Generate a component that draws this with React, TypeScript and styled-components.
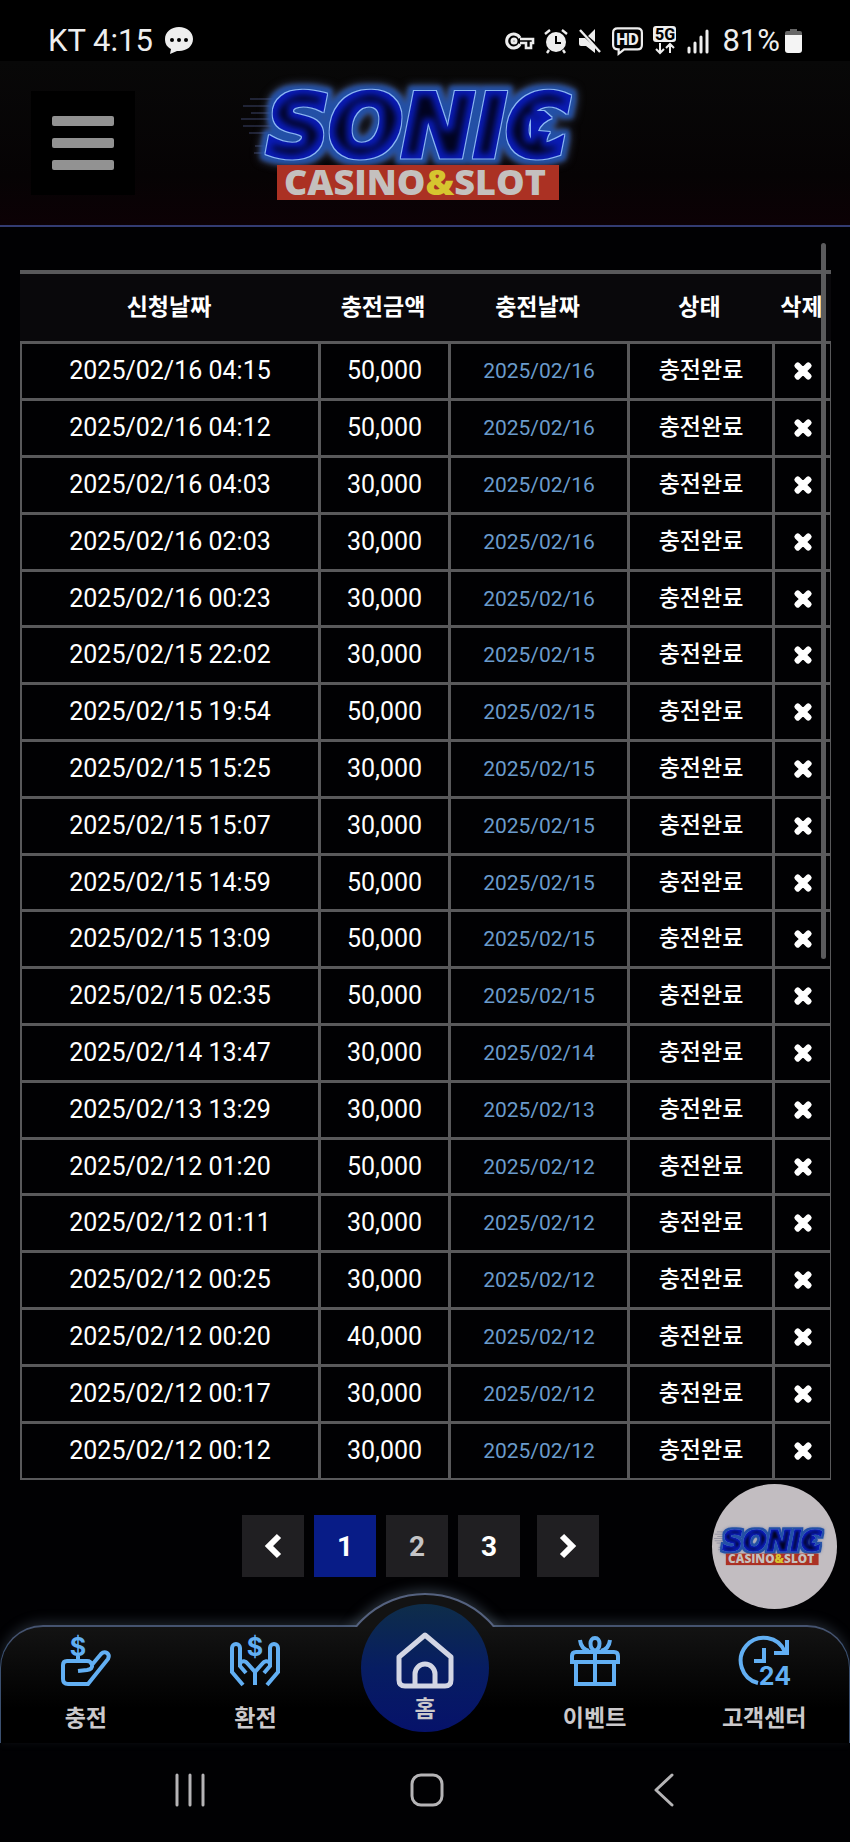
import React, { useState } from 'react';
import styled, { createGlobalStyle } from 'styled-components';
import { FaTimes } from 'react-icons/fa';

/**
 * 충전 신청 내역 타입 정의
 */
interface ChargeItem {
  requestedAt: string;
  amount: string;
}

// 충전 신청 내역 목록
const CHARGE_LIST: ChargeItem[] = [
  { requestedAt: '2025/02/16 04:15', amount: '50,000' },
  { requestedAt: '2025/02/16 04:12', amount: '50,000' },
  { requestedAt: '2025/02/16 04:03', amount: '30,000' },
  { requestedAt: '2025/02/16 02:03', amount: '30,000' },
  { requestedAt: '2025/02/16 00:23', amount: '30,000' },
  { requestedAt: '2025/02/15 22:02', amount: '30,000' },
  { requestedAt: '2025/02/15 19:54', amount: '50,000' },
  { requestedAt: '2025/02/15 15:25', amount: '30,000' },
  { requestedAt: '2025/02/15 15:07', amount: '30,000' },
  { requestedAt: '2025/02/15 14:59', amount: '50,000' },
  { requestedAt: '2025/02/15 13:09', amount: '50,000' },
  { requestedAt: '2025/02/15 02:35', amount: '50,000' },
  { requestedAt: '2025/02/14 13:47', amount: '30,000' },
  { requestedAt: '2025/02/13 13:29', amount: '30,000' },
  { requestedAt: '2025/02/12 01:20', amount: '50,000' },
  { requestedAt: '2025/02/12 01:11', amount: '30,000' },
  { requestedAt: '2025/02/12 00:25', amount: '30,000' },
  { requestedAt: '2025/02/12 00:20', amount: '40,000' },
  { requestedAt: '2025/02/12 00:17', amount: '30,000' },
  { requestedAt: '2025/02/12 00:12', amount: '30,000' },
];

const PAGES = [1, 2, 3];

/* ===================== 로고 ===================== */

/**
 * 로고 컴포넌트
 * - id: 필터 식별자 (한 화면에 두 번 그려지므로 구분 필요)
 */
const Logo: React.FC<{ id: string }> = ({ id }) => (
  <LogoSvg viewBox="0 0 380 136" role="img" aria-label="SONIC CASINO&SLOT">
    <defs>
      {/* 바깥 광채 → 파란 테두리 → 밝은 외곽선 → 글자 → 안쪽 음영 순서로 합성 */}
      <filter id={id} x="-20%" y="-40%" width="140%" height="180%" colorInterpolationFilters="sRGB">
        <feMorphology in="SourceAlpha" operator="dilate" radius="5" result="wide" />
        <feGaussianBlur in="wide" stdDeviation="5" result="haloShape" />
        <feFlood floodColor="#6377a8" floodOpacity="0.7" />
        <feComposite in2="haloShape" operator="in" result="halo" />
        <feGaussianBlur in="wide" stdDeviation="2" result="rimShape" />
        <feFlood floodColor="#2350a6" />
        <feComposite in2="rimShape" operator="in" result="rim" />
        <feMorphology in="SourceAlpha" operator="dilate" radius="1" result="lineShape" />
        <feFlood floodColor="#8db8f5" />
        <feComposite in2="lineShape" operator="in" result="line" />
        <feMorphology in="SourceAlpha" operator="erode" radius="5" result="core" />
        <feGaussianBlur in="core" stdDeviation="3" result="coreShape" />
        <feFlood floodColor="#01031f" />
        <feComposite in2="coreShape" operator="in" result="shade" />
        <feMerge>
          <feMergeNode in="halo" />
          <feMergeNode in="rim" />
          <feMergeNode in="line" />
          <feMergeNode in="SourceGraphic" />
          <feMergeNode in="shade" />
        </feMerge>
      </filter>
    </defs>
    {/* 속도감을 주는 왼쪽 선 */}
    <path
      d="M15 24H60M8 31H60M16 38H60M6 44H60M8 51H60M14 58H60M20 71H60M19 78H60"
      stroke="#3a4266"
      strokeWidth="1"
    />
    <g filter={`url(#${id})`} fill="#0a1bb4">
      <LogoTitle x="32" y="81">SONIC</LogoTitle>
      {/* 마지막 글자 안쪽의 가시 모양 */}
      <path d="M296 36l13 0 8 7q-11 4-14 13l12 1q-5 6-3 15l-16-2z" />
    </g>
    <rect x="42" y="90" width="282" height="35" fill="#ab3123" />
    <LogoSub x="49" y="120">
      CASINO<tspan fill="#d6c52f">&amp;</tspan>SLOT
    </LogoSub>
  </LogoSvg>
);

/* ===================== 하단 메뉴 아이콘 ===================== */

const ChargeIcon = () => (
  <MenuSvg viewBox="0 0 50 50">
    <IconText x="17" y="20" fontSize="25">$</IconText>
    <path d="M17 20v5M17 35l9-1q6-1 5-5t-5-4H6q-4 0-4 4v14q0 5 5 5h20l20-25q2-4-1-6t-6 1L30 30" />
  </MenuSvg>
);

const ExchangeIcon = () => (
  <MenuSvg viewBox="0 0 50 50">
    <IconText x="25" y="20" fontSize="25">$</IconText>
    <path d="M13 49L2 36V12a4 4 0 0 1 8 0v18l6 7M10 27q4-4 8 1l7 8" />
    <path d="M37 49l11-13V12a4 4 0 0 0-8 0v18l-6 7M40 27q-4-4-8 1l-7 8v13" />
  </MenuSvg>
);

const EventIcon = () => (
  <MenuSvg viewBox="0 0 50 50">
    <path d="M25 15c-6-3-6-13 0-13s6 10 0 13zM10 4q1 9 9 11M40 4q-1 9-9 11" />
    <path d="M2 28v-8q0-4 4-4h38q4 0 4 4v8M2 26h46M6 26v22h38V26M25 15v33" />
  </MenuSvg>
);

const CenterIcon = () => (
  <MenuSvg viewBox="0 0 50 50">
    <path d="M19 47A23 23 0 1 1 46 16M48 4v13H35M25 12v13H15" />
    <IconText x="36" y="49" fontSize="25">24</IconText>
  </MenuSvg>
);

const HomeIcon = () => (
  <HomeSvg viewBox="0 0 58 57">
    <path d="M29 3l26 22v23q0 6-6 6H9q-6 0-6-6V25z" />
    <path d="M19 54V42a10 10 0 0 1 20 0v12" />
  </HomeSvg>
);

/**
 * 충전 내역 페이지
 * - 상태바, 헤더, 내역 테이블, 페이지네이션, 하단 메뉴로 구성
 */
const App: React.FC = () => {
  // 현재 페이지 번호
  const [page, setPage] = useState(1);

  return (
    <Page>
      <GlobalStyle />

      {/* 휴대폰 상태바 */}
      <StatusBar>
        <StatusGroup $gap={12}>
          <span>KT 4:15</span>
          <svg width="28" height="28" viewBox="0 0 28 28" fill="#eee">
            <path d="M14 0C6 0 0 5 0 12c0 5 2 8 6 10l-1 5 7-3h2c8 0 14-5 14-12S22 0 14 0z" />
            <g fill="#000">
              <circle cx="7" cy="13" r="2" />
              <circle cx="14" cy="13" r="2" />
              <circle cx="21" cy="13" r="2" />
            </g>
          </svg>
        </StatusGroup>
        <StatusGroup $gap={13}>
          <StatusGroup $gap={9}>
            <svg width="30" height="28" viewBox="0 0 30 28" fill="none" stroke="#eee" strokeWidth="3">
              <path d="M15 12h13v4h-2v5h-5v-5h-6" strokeWidth="2.6" />
              <path d="M15 11A7 7 0 1 0 15 17" />
              <circle cx="9" cy="14" r="2" />
            </svg>
            <svg width="24" height="28" viewBox="0 0 24 28">
              <circle cx="12" cy="15" r="10" fill="#eee" />
              <path d="M12 9v7h5" stroke="#000" strokeWidth="2" fill="none" />
              <path d="M1 7l5-4M23 7l-5-4M5 23l-2 3M19 23l2 3" stroke="#eee" strokeWidth="2.4" />
            </svg>
            <svg width="26" height="28" viewBox="0 0 24 28" fill="#eee">
              <path d="M1 11h6l10 9v6l-9-7H3q-2 0-2-2zM10 9l7-7v13z" />
              <path d="M2 3l20 22" stroke="#eee" strokeWidth="2.4" />
            </svg>
            <svg width="31" height="31" viewBox="0 0 28 28">
              <path
                d="M5 3h18q4 0 4 4v11q0 4-4 4H11l-5 4v-4q-5 0-5-4V7q0-4 4-4z"
                fill="none"
                stroke="#eee"
                strokeWidth="2"
              />
              <StatusText x="14" y="18" fontSize="15" fill="#eee">HD</StatusText>
            </svg>
            <svg width="26" height="32" viewBox="0 0 26 32">
              <rect x="1" y="1" width="23" height="16" rx="3" fill="#eee" />
              <StatusText x="13" y="15" fontSize="16" fill="#000">5G</StatusText>
              <path d="M8 18v9M4 24l4 4 4-4M18 28v-8M14 23l4-4 4 4" stroke="#eee" strokeWidth="2" fill="none" />
            </svg>
            <svg width="22" height="28" viewBox="0 0 22 28">
              <path
                d="M2 21v4M8 16v9M14 10v15M20 4v21"
                stroke="#eee"
                strokeWidth="3"
                strokeLinecap="round"
              />
            </svg>
          </StatusGroup>
          <StatusGroup $gap={5}>
            <span>81%</span>
            <svg width="17" height="26" viewBox="0 0 17 26">
              <path d="M0 8V5q0-2 2-2h3V1h7v2h3q2 0 2 2v3z" fill="#666" />
              <path d="M0 7h17v15q0 3-3 3H3q-3 0-3-3z" fill="#f4f4f4" />
            </svg>
          </StatusGroup>
        </StatusGroup>
      </StatusBar>

      {/* 헤더 - 햄버거 메뉴 + 로고 */}
      <Header>
        <HamburgerButton type="button" aria-label="메뉴">
          <HamburgerLine />
          <HamburgerLine />
          <HamburgerLine />
        </HamburgerButton>
        <HeaderLogo>
          <Logo id="logo-head" />
        </HeaderLogo>
      </Header>

      <Main>
        {/* 충전 내역 테이블 */}
        <ChargeTable>
          <colgroup>
            <col />
            <Col $width={130} />
            <Col $width={179} />
            <Col $width={145} />
            <Col $width={59} />
          </colgroup>
          <thead>
            <HeadRow>
              <HeadCell>신청날짜</HeadCell>
              <HeadCell>충전금액</HeadCell>
              <HeadCell>충전날짜</HeadCell>
              <HeadCell>상태</HeadCell>
              <HeadCell>삭제</HeadCell>
            </HeadRow>
          </thead>
          <tbody>
            {CHARGE_LIST.map(item => (
              <BodyRow key={item.requestedAt}>
                <Cell>{item.requestedAt}</Cell>
                <Cell>{item.amount}</Cell>
                <DateCell>{item.requestedAt.split(' ')[0]}</DateCell>
                <StateCell>충전완료</StateCell>
                <Cell>
                  <DeleteButton type="button" aria-label="삭제">
                    <FaTimes />
                  </DeleteButton>
                </Cell>
              </BodyRow>
            ))}
          </tbody>
        </ChargeTable>

        {/* 페이지네이션 */}
        <Pagination aria-label="페이지">
          <PageButton type="button" aria-label="이전" onClick={() => setPage(Math.max(1, page - 1))}>
            <Chevron viewBox="0 0 18 26">
              <path d="M15 3L5 13l10 10" />
            </Chevron>
          </PageButton>
          {PAGES.map(n => (
            <PageButton key={n} type="button" $active={n === page} $dim={n === 2} onClick={() => setPage(n)}>
              {n}
            </PageButton>
          ))}
          <NextButton type="button" aria-label="다음" onClick={() => setPage(Math.min(3, page + 1))}>
            <Chevron viewBox="0 0 18 26">
              <path d="M3 3l10 10L3 23" />
            </Chevron>
          </NextButton>
        </Pagination>

        <ScrollThumb />
        <FloatingButton type="button">
          <Logo id="logo-float" />
        </FloatingButton>
      </Main>

      {/* 하단 메뉴 */}
      <BottomMenu>
        <Bump />
        <MenuLink href="#charge">
          <ChargeIcon />
          충전
        </MenuLink>
        <MenuLink href="#exchange">
          <ExchangeIcon />
          환전
        </MenuLink>
        <HomeLink href="#home">
          <HomeIcon />
          홈
        </HomeLink>
        <MenuLink href="#event">
          <EventIcon />
          이벤트
        </MenuLink>
        <MenuLink href="#center">
          <CenterIcon />
          고객센터
        </MenuLink>
      </BottomMenu>

      {/* 휴대폰 내비게이션 바 */}
      <SystemBar>
        <SystemButton type="button" aria-label="최근 앱">
          <svg width="32" height="34" viewBox="0 0 32 34">
            <path d="M3 2v30M16 2v30M29 2v30" />
          </svg>
        </SystemButton>
        <SystemButton type="button" aria-label="홈 화면">
          <svg width="34" height="34" viewBox="0 0 34 34">
            <rect x="2" y="2" width="30" height="30" rx="9" />
          </svg>
        </SystemButton>
        <SystemButton type="button" aria-label="뒤로">
          <svg width="20" height="34" viewBox="0 0 20 34">
            <path d="M18 2L2 17l16 15" />
          </svg>
        </SystemButton>
      </SystemBar>
    </Page>
  );
};

/* ===================== 스타일드 컴포넌트 영역 ===================== */

const GlobalStyle = createGlobalStyle`
  * {
    box-sizing: border-box;
  }

  body {
    margin: 0;
    background: #010103;
    color: #fff;
    font-family: Roboto, 'Noto Sans CJK KR', sans-serif;
  }

  button {
    padding: 0;
    border: none;
    color: inherit;
    font-family: inherit;
    cursor: pointer;
  }

  svg {
    display: block;
    flex-shrink: 0;
    overflow: visible;
  }
`;

const Page = styled.div`
  display: flex;
  flex-direction: column;
  min-height: 100vh;
`;

/**
 * 상태바 - 통신사, 시간, 배터리
 */
const StatusBar = styled.div`
  display: flex;
  align-items: center;
  justify-content: space-between;
  height: 61px;
  padding: 20px 48px 0;
  background: #000;
  color: #eee;
  font-size: 31px;
  line-height: 41px;
`;

const StatusGroup = styled.div<{ $gap: number }>`
  display: flex;
  align-items: center;
  gap: ${({ $gap }) => $gap}px;
`;

const StatusText = styled.text`
  font-family: Roboto, sans-serif;
  font-weight: 800;
  text-anchor: middle;
`;

/**
 * 헤더 - 로고는 항상 가운데 정렬
 */
const Header = styled.header`
  display: grid;
  grid-template-columns: 1fr auto 1fr;
  align-items: center;
  height: 166px;
  padding: 0 31px;
  background: linear-gradient(#080808, #060304 70%, #0c0105);
  border-bottom: 2px solid #333c72;
`;

const HamburgerButton = styled.button`
  display: flex;
  flex-direction: column;
  align-items: center;
  justify-content: center;
  gap: 12px;
  width: 104px;
  height: 104px;
  background: #000;
`;

const HamburgerLine = styled.span`
  width: 62px;
  height: 10px;
  border-radius: 2px;
  background: #929292;
`;

const HeaderLogo = styled.div`
  width: 380px;
`;

const LogoSvg = styled.svg`
  width: 100%;
  height: auto;
`;

const LogoTitle = styled.text`
  stroke: #0a1bb4;
  stroke-width: 5;
  font-family: 'DejaVu Sans', sans-serif;
  font-size: 86px;
  font-style: italic;
  font-weight: 700;
`;

const LogoSub = styled.text`
  fill: #c4c0be;
  font-family: 'Open Sans', sans-serif;
  font-size: 36px;
  font-weight: 800;
`;

const Main = styled.main`
  position: relative;
  flex: 1;
  padding: 43px 19px 48px 20px;
`;

/**
 * 내역 테이블
 */
const ChargeTable = styled.table`
  width: 100%;
  table-layout: fixed;
  border-collapse: separate;
  border-spacing: 0;
  text-align: center;
`;

const Col = styled.col<{ $width: number }>`
  width: ${({ $width }) => $width}px;
`;

const HeadRow = styled.tr`
  height: 74px;
  background: #09080b;
`;

const HeadCell = styled.th`
  padding: 0;
  border-top: 4px solid #59595b;
  border-bottom: 3px solid #59595b;
  font-size: 23px;
  font-weight: 700;
  line-height: 30px;
  white-space: nowrap;
`;

const BodyRow = styled.tr`
  height: 57px;

  &:nth-child(5n) {
    height: 56px;
  }
`;

const Cell = styled.td`
  padding: 0;
  border-left: 3px solid #59595b;
  border-bottom: 3px solid #59595b;
  font-size: 25px;
  line-height: 30px;
  white-space: nowrap;

  &:first-child {
    border-left-width: 2px;
  }

  &:last-child {
    border-right: 1px solid #59595b;
  }

  ${BodyRow}:last-child & {
    border-bottom-width: 2px;
  }
`;

const DateCell = styled(Cell)`
  color: #6a9bcc;
  font-size: 21px;
`;

const StateCell = styled(Cell)`
  font-size: 23px;
  font-weight: 500;
`;

const DeleteButton = styled.button`
  display: block;
  margin: 0 auto;
  background: none;
  font-size: 22px;

  svg {
    stroke: currentColor;
    stroke-width: 50;
  }
`;

/**
 * 페이지네이션
 */
const Pagination = styled.nav`
  display: flex;
  justify-content: center;
  gap: 10px;
  margin-top: 35px;
  padding-right: 10px;
`;

const PageButton = styled.button<{ $active?: boolean; $dim?: boolean }>`
  display: flex;
  align-items: center;
  justify-content: center;
  width: 62px;
  height: 62px;
  background: ${({ $active }) => ($active ? '#081c87' : '#201f22')};
  color: ${({ $dim }) => ($dim ? '#c4c4c6' : '#fff')};
  font-size: 28px;
  font-weight: 700;
`;

const NextButton = styled(PageButton)`
  margin-left: 7px;
`;

const Chevron = styled.svg`
  width: 18px;
  height: 26px;
  fill: none;
  stroke: currentColor;
  stroke-width: 6;
`;

/**
 * 스크롤 위치 표시
 */
const ScrollThumb = styled.div`
  position: absolute;
  top: 16px;
  right: 24px;
  width: 5px;
  height: 716px;
  border-radius: 3px;
  background: #5b5b5d;
`;

/**
 * 오른쪽 하단 플로팅 버튼
 */
const FloatingButton = styled.button`
  position: absolute;
  right: 13px;
  bottom: 16px;
  width: 125px;
  height: 125px;
  border-radius: 50%;
  background: #c2bdc1;
`;

/**
 * 하단 메뉴
 * - 가운데 홈 버튼 자리는 위로 볼록하게 솟아 있음
 */
const BottomMenu = styled.nav`
  position: relative;
  display: grid;
  grid-template-columns: repeat(5, 1fr);
  height: 118px;
  border: 1px solid #3b5070;
  border-top: 2px solid #45536f;
  border-bottom: none;
  border-radius: 43px 43px 0 0;
  background: linear-gradient(#131313, #000 70%);
  box-shadow: 0 -4px 12px rgba(110, 130, 150, 0.25);
`;

const Bump = styled.div`
  position: absolute;
  top: -34px;
  left: 50%;
  width: 180px;
  height: 180px;
  margin-left: -90px;
  border: 2px solid #55627f;
  border-radius: 50%;
  background: #131313;
  box-shadow: 0 -4px 12px rgba(110, 130, 150, 0.35);
  clip-path: inset(-20px -20px 146px);
`;

const MenuLink = styled.a`
  display: flex;
  flex-direction: column;
  align-items: center;
  gap: 19px;
  padding-top: 9px;
  color: #cbc9cb;
  font-size: 23px;
  font-weight: 700;
  line-height: 28px;
  text-decoration: none;
  white-space: nowrap;
`;

const HomeLink = styled(MenuLink)`
  position: relative;
  justify-self: center;
  gap: 7px;
  width: 128px;
  height: 128px;
  margin-top: -23px;
  padding-top: 28px;
  border-radius: 50%;
  background: linear-gradient(#0e2d49, #071d62 50%, #06126a);
`;

const MenuSvg = styled.svg`
  width: 50px;
  height: 50px;
  fill: none;
  stroke: #62aff3;
  stroke-width: 4;
`;

const IconText = styled.text`
  fill: #62aff3;
  stroke: none;
  font-family: Inter, sans-serif;
  font-weight: 700;
  text-anchor: middle;
`;

const HomeSvg = styled(MenuSvg)`
  width: 58px;
  height: 57px;
  stroke: #d3d6e4;
  stroke-width: 5;
  stroke-linejoin: round;
`;

/**
 * 휴대폰 내비게이션 바
 */
const SystemBar = styled.div`
  display: grid;
  grid-template-columns: repeat(3, 1fr);
  height: 99px;
  padding: 0 68px 5px 72px;
  background: #010103;
`;

const SystemButton = styled.button`
  display: flex;
  align-items: center;
  justify-content: center;
  background: none;

  svg {
    fill: none;
    stroke: #b5b4b6;
    stroke-width: 3;
    stroke-linecap: round;
    stroke-linejoin: round;
  }
`;

export default App;
